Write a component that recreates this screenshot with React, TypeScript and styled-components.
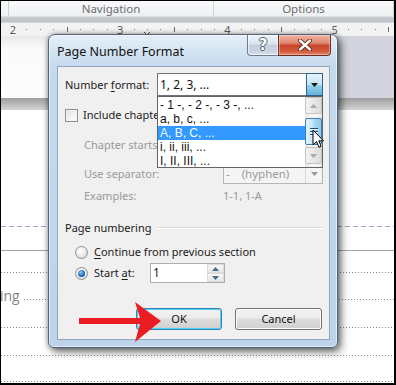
import React from "react";
import styled, { createGlobalStyle, css } from "styled-components";

const UI = `"Noto Sans", "Open Sans", "DejaVu Sans", sans-serif`;
const LIST = `"Liberation Sans", Arial, sans-serif`;

const GlobalStyle = createGlobalStyle`
  html, body { margin: 0; padding: 0; background: #fff; }
  body { width: 396px; height: 385px; overflow: hidden; font-family: ${UI}; }
  * { box-sizing: border-box; }
`;

const Screen = styled.div`
  position: relative;
  width: 396px;
  height: 385px;
  overflow: hidden;
  display: flex;
  flex-direction: column;
  background: #fff;
  border-style: solid;
  border-color: #000;
  border-width: 1px 2px 2px 1px;
`;

/* ---------- ribbon + ruler ---------- */
const GroupLabels = styled.div`
  height: 15px;
  flex: none;
  display: grid;
  grid-template-columns: 8px 205px 180px;
  background: linear-gradient(#f8f9fb, #edf0f3);
`;

const GroupLabel = styled.div`
  border-right: 1px solid #c9d8c4;
  font: 11.5px/1 ${UI};
  color: #6e6e6e;
  display: flex;
  align-items: center;
  justify-content: center;
`;

const RibbonFoot = styled.div`
  height: 7px;
  flex: none;
  border-top: 1px solid #dde1e6;
  background: linear-gradient(#c9cdd2, #bfc3c8 70%, #d9dce0);
`;

const RulerBar = styled.div`
  height: 13px;
  flex: none;
  background: #f3f3f3;
  svg { display: block; }
`;

/* ---------- document ---------- */
const DocArea = styled.div`
  flex: 1;
  display: flex;
  flex-direction: column;
`;

const TopGap = styled.div`
  height: 62px;
  flex: none;
  display: flex;
`;

const GapLeft = styled.div`
  width: 47px;
  background: linear-gradient(#e9e9e9, #fafafa 12px, #fdfdfd);
`;

const GapRight = styled.div`
  flex: 1;
  background: #d3d4dd;
`;

const PageBreak = styled.div`
  height: 12px;
  flex: none;
  background: linear-gradient(#9e9e9e, #b4b4b4 40%, #d4d4d4);
`;

const Page = styled.div`
  flex: 1;
  display: flex;
  flex-direction: column;
  background: #fff;
`;

const Rule = styled.div<{ $kind: "dashed" | "solid" | "dotted"; $gap: number }>`
  height: 1px;
  flex: none;
  margin-top: ${(p) => p.$gap}px;
  ${(p) =>
    p.$kind === "dashed"
      ? css`background: repeating-linear-gradient(to right, #98a3cb 0 5px, transparent 5px 8px);`
      : p.$kind === "solid"
      ? css`background: #a4a4a4;`
      : css`background: repeating-linear-gradient(to right, #8a8a8a 0 1px, transparent 1px 3px);`}
`;

const TocRow = styled.div`
  margin-top: 16px;
  height: 13px;
  flex: none;
  display: flex;
  align-items: flex-end;
`;

const TocText = styled.span`
  font: 14px/13px "Open Sans", ${UI};
  color: #858585;
  margin-left: -1px;
  padding-right: 4px;
  height: 13px;
  overflow: visible;
`;

const Leader = styled.span`
  flex: 1;
  height: 1px;
  margin-bottom: 2px;
  background: repeating-linear-gradient(to right, #8a8a8a 0 1px, transparent 1px 3px);
`;

/* ---------- dialog ---------- */
const Dialog = styled.div`
  position: absolute;
  left: 47px;
  top: 33px;
  width: 290px;
  height: 314px;
  display: flex;
  flex-direction: column;
  border: 1px solid #52657d;
  border-radius: 7px 7px 6px 6px;
  background: linear-gradient(180deg, #e6eff8 0px, #d6e5f4 14px, #c6daee 31px, #bcd3ea 100%);
  box-shadow: inset 0 0 0 1px rgba(255, 255, 255, 0.55), 3px 4px 8px rgba(0, 0, 0, 0.55),
    0 0 5px rgba(0, 0, 0, 0.35);
  font: 11px/14px ${UI};
  color: #1b1b1b;
`;

const TitleBar = styled.div`
  height: 31px;
  flex: none;
  display: flex;
  align-items: flex-start;
`;

const Title = styled.div`
  margin: 10px 0 0 8px;
  font: 12.5px/14px ${UI};
  color: #111;
`;

const Caption = styled.div`
  margin-left: auto;
  margin-right: 6px;
  display: flex;
  height: 21px;
`;

const CapBtn = styled.div<{ $close?: boolean }>`
  height: 21px;
  display: flex;
  align-items: center;
  justify-content: center;
  border: 1px solid ${(p) => (p.$close ? "#6b2f22" : "#6c7e93")};
  border-top: none;
  ${(p) =>
    p.$close
      ? css`
          width: 53px;
          border-radius: 0 0 4px 0;
          background: linear-gradient(#eeb3a3, #e08a72 40%, #c9452c 52%, #d3583c 80%, #e18c6c);
          box-shadow: inset 0 0 0 1px rgba(255, 220, 210, 0.45);
        `
      : css`
          width: 31px;
          border-right: none;
          border-radius: 0 0 0 4px;
          background: linear-gradient(#eef3f8, #dbe4ee 45%, #c3cfdc 52%, #c9d5e2 85%, #dae3ed);
          box-shadow: inset 0 0 0 1px rgba(255, 255, 255, 0.6);
        `}
`;

const HelpGlyph = styled.span`
  font: bold 15px/1 "DejaVu Sans", sans-serif;
  color: #fff;
  text-shadow: -1px 0 #4f5f73, 1px 0 #4f5f73, 0 -1px #4f5f73, 0 1px #4f5f73;
  margin-top: 1px;
`;

const Client = styled.div`
  flex: 1;
  margin: 0 7px 7px 8px;
  background: #f0f0f0;
  border: 1px solid #91a6bf;
  padding: 6px 6px 0 7px;
  display: flex;
  flex-direction: column;
`;

const Row = styled.div<{ $top: number; $h?: number; $indent?: number }>`
  display: flex;
  align-items: center;
  flex: none;
  margin-top: ${(p) => p.$top}px;
  height: ${(p) => p.$h ?? 20}px;
  padding-left: ${(p) => p.$indent ?? 0}px;
  position: relative;
`;

const Label = styled.span<{ $w?: number; $disabled?: boolean }>`
  ${(p) => (p.$w ? `width: ${p.$w}px; flex: none;` : "")}
  color: ${(p) => (p.$disabled ? "#9a9a9a" : "#1b1b1b")};
  white-space: nowrap;
`;

const U = styled.span`
  text-decoration: underline;
  text-underline-offset: 2px;
`;

const ComboWrap = styled.div<{ $w: number }>`
  position: relative;
  width: ${(p) => p.$w}px;
  flex: none;
  height: 100%;
`;

const ComboBox = styled.div<{ $disabled?: boolean }>`
  height: 100%;
  display: flex;
  border: 1px solid ${(p) => (p.$disabled ? "#b3b7ba" : "#6e7479")};
  background: ${(p) => (p.$disabled ? "#f4f4f4" : "#fff")};
`;

const ComboText = styled.div<{ $disabled?: boolean }>`
  flex: 1;
  display: flex;
  align-items: center;
  padding-left: 2px;
  font-size: ${(p) => (p.$disabled ? 11.5 : 12)}px;
  color: ${(p) => (p.$disabled ? "#9a9a9a" : "#111")};
  white-space: pre;
`;

const DropBtn = styled.div<{ $active?: boolean }>`
  width: 17px;
  flex: none;
  display: flex;
  align-items: center;
  justify-content: center;
  ${(p) =>
    p.$active
      ? css`
          border: 1px solid #2c628b;
          margin: -1px -1px -1px 0;
          background: linear-gradient(#e5f4fc, #c4e5f6 50%, #98d1ef 51%, #68b3db);
        `
      : css`
          border-left: 1px solid #dadada;
          background: transparent;
        `}
`;

const ListPopup = styled.div`
  position: absolute;
  left: 0;
  top: 100%;
  width: 166px;
  height: 72px;
  border: 1px solid #646464;
  background: #fff;
  display: flex;
  overflow: hidden;
  z-index: 2;
  font: 12px/14px ${LIST};
`;

const ListItems = styled.div`
  flex: 1;
  padding-top: 1px;
  display: flex;
  flex-direction: column;
`;

const ListItem = styled.div<{ $selected?: boolean }>`
  height: 14px;
  flex: none;
  line-height: 14px;
  padding-left: 2px;
  white-space: pre;
  background: ${(p) => (p.$selected ? "#3399ff" : "transparent")};
  color: ${(p) => (p.$selected ? "#f4f9ff" : "#111")};
`;

const ScrollBar = styled.div`
  width: 17px;
  flex: none;
  display: flex;
  flex-direction: column;
  background: linear-gradient(90deg, #e6e6e6, #f5f5f5 30%, #f5f5f5 70%, #e8e8e8);
`;

const ScrollBtn = styled.div`
  height: 17px;
  flex: none;
  border: 1px solid #c2c2c2;
  border-radius: 2px;
  background: linear-gradient(90deg, #f3f3f3, #e7e7e7 50%, #dcdcdc);
  display: flex;
  align-items: center;
  justify-content: center;
`;

const Thumb = styled.div`
  height: 27px;
  flex: none;
  margin: 4px 0 2px;
  border: 1px solid #3c7fb1;
  border-radius: 2px;
  background: linear-gradient(90deg, #e3f4fc, #c4e6f7 45%, #a9d9f2 55%, #92cbeb);
  display: flex;
  flex-direction: column;
  align-items: center;
  justify-content: center;
  gap: 2px;
`;

const Grip = styled.span`
  width: 8px;
  height: 1px;
  background: #1c4f77;
  box-shadow: 0 1px 0 #e8f6fd;
`;

const Track = styled.div`
  flex: 1;
`;

const CheckBox = styled.span`
  width: 13px;
  height: 13px;
  flex: none;
  border: 1px solid #8e8f8f;
  background: linear-gradient(135deg, #dcdcdc, #f4f4f4 60%, #fcfcfc);
  box-shadow: inset 0 0 0 1px #f4f4f4;
  margin-right: 5px;
`;

const Radio = styled.span<{ $checked?: boolean }>`
  width: 13px;
  height: 13px;
  flex: none;
  border-radius: 50%;
  border: 1px solid #8e8f8f;
  background: radial-gradient(circle at 40% 35%, #ffffff, #e6e6e6 60%, #cfcfcf);
  display: flex;
  align-items: center;
  justify-content: center;
  margin-right: 6px;
  &::after {
    content: "";
    display: ${(p) => (p.$checked ? "block" : "none")};
    width: 7px;
    height: 7px;
    border-radius: 50%;
    background: radial-gradient(circle at 40% 35%, #9fd1f9, #2a7ccb 45%, #0d3c73);
  }
`;

const GroupHeader = styled.div`
  display: flex;
  align-items: center;
  flex: none;
  margin-top: 12px;
  height: 20px;
  gap: 6px;
`;

const GroupLine = styled.span`
  flex: 1;
  height: 1px;
  background: #dcdcdc;
  border-bottom: 1px solid #fff;
  box-sizing: content-box;
`;

const Spin = styled.div`
  width: 75px;
  height: 20px;
  flex: none;
  display: flex;
  border: 1px solid #abadb3;
  background: #fff;
`;

const SpinText = styled.div`
  flex: 1;
  display: flex;
  align-items: center;
  padding-left: 2px;
  font-size: 12px;
`;

const SpinBtns = styled.div`
  width: 17px;
  flex: none;
  display: flex;
  flex-direction: column;
`;

const SpinBtn = styled.div`
  flex: 1;
  display: flex;
  align-items: center;
  justify-content: center;
  border: 1px solid #dcdcdc;
  background: linear-gradient(#f7f7f7, #e8e8e8);
`;

const Buttons = styled.div`
  display: flex;
  flex: none;
  margin-top: 25px;
  padding-left: 71px;
  gap: 13px;
`;

const PushButton = styled.div<{ $default?: boolean; $w: number }>`
  width: ${(p) => p.$w}px;
  height: 22px;
  border-radius: 3px;
  display: flex;
  align-items: center;
  justify-content: center;
  color: #111;
  border: 1px solid ${(p) => (p.$default ? "#3c7fb1" : "#707070")};
  background: linear-gradient(#f2f2f2, #ebebeb 45%, #dddddd 50%, #cfcfcf);
  box-shadow: inset 0 0 0 1px ${(p) => (p.$default ? "#48d3f7" : "#fcfcfc")};
`;

const Overlay = styled.svg<{ $x: number; $y: number }>`
  position: absolute;
  left: ${(p) => p.$x}px;
  top: ${(p) => p.$y}px;
  overflow: visible;
  z-index: 5;
`;

const Tri = ({ dir = "down", color = "#1a1a1a" }: { dir?: "down" | "up"; color?: string }) => (
  <svg width="7" height="4" viewBox="0 0 7 4">
    <path d={dir === "down" ? "M0 0H7L3.5 4Z" : "M0 4H7L3.5 0Z"} fill={color} />
  </svg>
);

const Ruler = () => {
  const inch = 107.2;
  const origin = 12;
  const marks: React.ReactNode[] = [];
  for (let i = -1; i < 4; i++) {
    for (let s = 1; s < 8; s++) {
      const x = origin + i * inch + (s * inch) / 8;
      if (x < 2 || x > 392) continue;
      if (s === 4) marks.push(<rect key={`${i}-${s}`} x={Math.round(x)} y={4} width={1} height={5} fill="#6a6a6a" />);
      else marks.push(<rect key={`${i}-${s}`} x={Math.round(x)} y={6} width={1} height={1} fill="#7a7a7a" />);
    }
  }
  const nums = [2, 3, 4, 5];
  return (
    <svg width="393" height="13" viewBox="0 0 393 13">
      {marks}
      {nums.map((n, k) => (
        <text key={n} x={origin + k * inch} y={11} fontSize="11" fontFamily="Noto Sans, sans-serif" fill="#5c5c5c" textAnchor="middle">
          {n}
        </text>
      ))}
      <path d="M143 9 L146 12 L149 9" fill="none" stroke="#555" strokeWidth="1" />
    </svg>
  );
};

export default function App() {
  return (
    <>
      <GlobalStyle />
      <Screen>
        <GroupLabels>
          <GroupLabel />
          <GroupLabel>Navigation</GroupLabel>
          <GroupLabel>Options</GroupLabel>
        </GroupLabels>
        <RibbonFoot />
        <RulerBar>
          <Ruler />
        </RulerBar>
        <DocArea>
          <TopGap>
            <GapLeft />
            <GapRight />
          </TopGap>
          <PageBreak />
          <Page>
            <Rule $kind="dashed" $gap={116} />
            <Rule $kind="solid" $gap={23} />
            <Rule $kind="dotted" $gap={21} />
            <TocRow>
              <TocText>ing</TocText>
              <Leader />
            </TocRow>
            <Rule $kind="dotted" $gap={25} />
            <Rule $kind="dotted" $gap={27} />
            <Rule $kind="dotted" $gap={25} />
          </Page>
        </DocArea>

        <Dialog>
          <TitleBar>
            <Title>Page Number Format</Title>
            <Caption>
              <CapBtn>
                <HelpGlyph>?</HelpGlyph>
              </CapBtn>
              <CapBtn $close>
                <svg width="14" height="12" viewBox="0 0 14 12">
                  <path d="M2 1.5 L12 10.5 M12 1.5 L2 10.5" stroke="#5a2217" strokeWidth="4.2" strokeLinecap="round" />
                  <path d="M2 1.5 L12 10.5 M12 1.5 L2 10.5" stroke="#fff" strokeWidth="2.4" strokeLinecap="round" />
                </svg>
              </CapBtn>
            </Caption>
          </TitleBar>
          <Client>
            <Row $top={0} $h={23}>
              <Label $w={92}>
                Number <U>f</U>ormat:
              </Label>
              <ComboWrap $w={166}>
                <ComboBox>
                  <ComboText>1, 2, 3, ...</ComboText>
                  <DropBtn $active>
                    <Tri />
                  </DropBtn>
                </ComboBox>
                <ListPopup>
                  <ListItems>
                    <ListItem>- 1 -, - 2 -, - 3 -, ...</ListItem>
                    <ListItem>a, b, c, ...</ListItem>
                    <ListItem $selected>A, B, C, ...</ListItem>
                    <ListItem>i, ii, iii, ...</ListItem>
                    <ListItem>I, II, III, ...</ListItem>
                  </ListItems>
                  <ScrollBar>
                    <ScrollBtn>
                      <Tri dir="up" color="#a9a9a9" />
                    </ScrollBtn>
                    <Thumb>
                      <Grip />
                      <Grip />
                      <Grip />
                    </Thumb>
                    <ScrollBtn>
                      <Tri color="#a9a9a9" />
                    </ScrollBtn>
                    <Track />
                  </ScrollBar>
                </ListPopup>
              </ComboWrap>
            </Row>
            <Row $top={9}>
              <CheckBox />
              <Label>Include chapte</Label>
            </Row>
            <Row $top={10} $indent={19}>
              <Label $disabled>Chapter starts</Label>
            </Row>
            <Row $top={9} $indent={19}>
              <Label $w={139} $disabled>
                Use separator:
              </Label>
              <ComboWrap $w={100}>
                <ComboBox $disabled>
                  <ComboText $disabled>{"-    (hyphen)"}</ComboText>
                  <DropBtn>
                    <Tri color="#9a9a9a" />
                  </DropBtn>
                </ComboBox>
              </ComboWrap>
            </Row>
            <Row $top={2} $indent={19}>
              <Label $w={139} $disabled>
                Examples:
              </Label>
              <Label $disabled>1-1, 1-A</Label>
            </Row>
            <GroupHeader>
              <Label>Page numbering</Label>
              <GroupLine />
            </GroupHeader>
            <Row $top={4} $indent={10}>
              <Radio />
              <Label>
                <U>C</U>ontinue from previous section
              </Label>
            </Row>
            <Row $top={1} $indent={10}>
              <Radio $checked />
              <Label $w={56}>
                Start <U>a</U>t:
              </Label>
              <Spin>
                <SpinText>1</SpinText>
                <SpinBtns>
                  <SpinBtn>
                    <Tri dir="up" color="#4d6a8a" />
                  </SpinBtn>
                  <SpinBtn>
                    <Tri color="#4d6a8a" />
                  </SpinBtn>
                </SpinBtns>
              </Spin>
            </Row>
            <Buttons>
              <PushButton $default $w={86}>
                OK
              </PushButton>
              <PushButton $w={87}>Cancel</PushButton>
            </Buttons>
          </Client>
        </Dialog>

        <Overlay $x={70} $y={295} width="95" height="50" viewBox="0 0 95 50">
          <path d="M8 22 L69 22 L64 6 L90 25 L64 46 L69 28 L8 28 Z" fill="#ec1c24" />
        </Overlay>
        <Overlay $x={311} $y={128} width="13" height="20" viewBox="0 0 13 20">
          <path d="M1 1 L1 16 L4.5 12.6 L7 18.2 L9.2 17.2 L6.8 11.8 L11.5 11.8 Z" fill="#fff" stroke="#000" strokeWidth="1" strokeLinejoin="round" />
        </Overlay>
      </Screen>
    </>
  );
}
